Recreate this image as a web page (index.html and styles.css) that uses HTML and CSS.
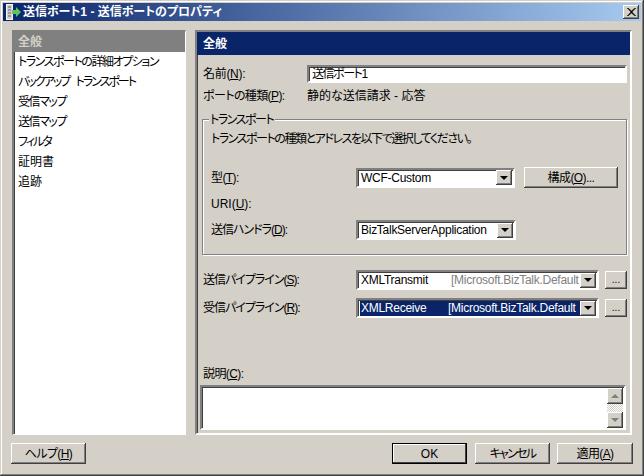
FILE: index.html
```html
<!DOCTYPE html>
<html lang="ja">
<head>
<meta charset="utf-8">
<title>送信ポート1 - 送信ポートのプロパティ</title>
<link rel="stylesheet" href="styles.css">
</head>
<body>
<div class="window">
  <div class="titlebar">
    <svg class="appicon" width="16" height="16" viewBox="0 0 16 16">
      <rect x="1.500" y="0.500" width="6" height="15" fill="#d4d0c8" stroke="#f4f4f4"/>
      <path d="M3 3h3M3 6h3M3 9h3M3 12h3" stroke="#506080"/>
      <path d="M7 6h4V3l5 5-5 5v-3H7z" fill="#58c860"/>
    </svg>
    <span class="titletext">送信ポート1 - 送信ポートのプロパティ</span>
    <button class="close" type="button"><svg width="9" height="8" viewBox="0 0 9 8"><path d="M1 0l3.500 3L8 0h0.800L5 4l3.800 4H8L4.500 5 1 8H0.200L4 4 0.200 0z" fill="#000" stroke="#000" stroke-width=".5"/></svg></button>
  </div>

  <div class="main">
    <ul class="nav sunken">
      <li class="selected">全般</li>
      <li class="k15">トランスポートの詳細オプション</li>
      <li class="k20 spaced">バックアップ トランスポート</li>
      <li class="k15">受信マップ</li>
      <li class="k15">送信マップ</li>
      <li class="k20">フィルタ</li>
      <li>証明書</li>
      <li>追跡</li>
    </ul>

    <section class="panel sunken">
      <h1 class="panel-head">全般</h1>
      <div class="form">
        <div class="row name-row">
          <label class="lbl-short k03">名前(<u>N</u>):</label>
          <div class="input sunken-field k15">送信ポート1</div>
        </div>
        <div class="row type-row">
          <label class="lbl-short k06">ポートの種類(<u>P</u>):</label>
          <span>静的な送信請求 - 応答</span>
        </div>

        <div class="group">
          <span class="legend k15">トランスポート</span>
          <p class="group-desc k15">トランスポートの種類とアドレスを以下で選択してください。</p>
          <div class="row r-type">
            <label class="lbl-group k06">型(<u>T</u>):</label>
            <div class="select sunken-field wide"><span class="val">WCF-Custom</span><span class="drop"><i></i></span></div>
            <button class="btn cfg k06" type="button">構成(<u>O</u>)...</button>
          </div>
          <div class="row r-uri"><label class="lbl-group">URI(<u>U</u>):</label></div>
          <div class="row r-handler">
            <label class="lbl-group k10">送信ハンドラ(<u>D</u>):</label>
            <div class="select sunken-field wide"><span class="val">BizTalkServerApplication</span><span class="drop"><i></i></span></div>
          </div>
        </div>

        <div class="row pipe first">
          <label class="lbl-pipe k10">送信パイプライン(<u>S</u>):</label>
          <div class="select sunken-field pipesel"><span class="val"><span class="pname">XMLTransmit</span><span class="pasm">[Microsoft.BizTalk.Default</span></span><span class="drop"><i></i></span></div>
          <button class="btn dots" type="button">...</button>
        </div>
        <div class="row pipe">
          <label class="lbl-pipe k10">受信パイプライン(<u>R</u>):</label>
          <div class="select sunken-field pipesel hilite"><span class="val"><span class="pname">XMLReceive</span><span class="pasm">[Microsoft.BizTalk.Default</span></span><span class="drop"><i></i></span></div>
          <button class="btn dots" type="button">...</button>
        </div>

        <label class="desc-label k06">説明(<u>C</u>):</label>
        <div class="textarea sunken-field">
          <div class="scroll">
            <span class="sbtn"><i class="up"></i></span>
            <span class="strack"></span>
            <span class="sbtn"><i></i></span>
          </div>
        </div>
      </div>
    </section>
  </div>

  <div class="footer">
    <button class="btn foot k06" type="button">ヘルプ(<u>H</u>)</button>
    <div class="spacer"></div>
    <button class="btn foot default" type="button">OK</button>
    <button class="btn foot k17" type="button">キャンセル</button>
    <button class="btn foot apply k06" type="button">適用(<u>A</u>)</button>
  </div>
</div>
</body>
</html>
```
FILE: styles.css
```css
* { box-sizing: border-box; }
html, body { margin: 0; padding: 0; }
body {
  width: 644px;
  height: 476px;
  overflow: hidden;
  background: #d4d0c8;
  font: 12px/14px "Liberation Sans", "Noto Sans CJK JP", sans-serif;
  font-feature-settings: "palt" 1;
  color: #000;
}
u { text-underline-offset: 1px; }

.k03 { letter-spacing: -.3px; }
.k06 { letter-spacing: -.6px; }
.k10 { letter-spacing: -1px; }
.k15 { letter-spacing: -1.45px; }
.k17 { letter-spacing: -1.7px; }
.k20 { letter-spacing: -2px; }
.spaced { word-spacing: 5px; }

.window {
  width: 644px;
  height: 476px;
  padding: 3px;
  background: #d4d0c8;
  box-shadow: inset -1px -1px 0 #404040, inset 1px 1px 0 #d4d0c8, inset -2px -2px 0 #808080, inset 2px 2px 0 #fff;
  display: flex;
  flex-direction: column;
}

.titlebar {
  height: 18px;
  flex: none;
  display: flex;
  align-items: center;
  padding: 0 2px;
  background: linear-gradient(90deg, #0a246a, #a6caf0);
  color: #fff;
  font-weight: bold;
}
.appicon { flex: none; }
.titletext { margin-left: 2px; flex: 1; white-space: nowrap; font-size: 12px; }
.close {
  width: 16px; height: 14px; padding: 0; flex: none;
  display: flex; align-items: center; justify-content: center;
  background: #d4d0c8; border: 0;
  box-shadow: inset -1px -1px 0 #404040, inset 1px 1px 0 #fff, inset -2px -2px 0 #808080;
}

.main {
  flex: none;
  height: 405px;
  margin-top: 9px;
  padding: 0 9px;
  display: flex;
  gap: 9px;
}

.sunken {
  border: 2px solid;
  border-color: #808080 #fff #fff #808080;
  box-shadow: inset 1px 1px 0 #404040;
}

.nav {
  width: 174px;
  flex: none;
  margin: 0;
  padding: 0;
  list-style: none;
  background: #fff;
  border-width: 2px 1px 1px 2px;
}
.nav li { height: 20px; padding: 3px 4px 0; white-space: nowrap; }
.nav li.selected { background: #808080; color: #d4d0c8; font-weight: bold; }

.panel { flex: 1; min-width: 0; display: flex; flex-direction: column; background: #d4d0c8; }
.panel-head {
  margin: 0;
  height: 23px;
  flex: none;
  padding: 5px 6px 0;
  background: #0a246a;
  color: #fff;
  font-size: 12px;
  line-height: 14px;
  font-weight: bold;
}

.form { flex: 1; padding: 10px 3px 0 6px; display: flex; flex-direction: column; }
.row { display: flex; align-items: center; }
label { display: block; white-space: nowrap; }

.sunken-field {
  background: #fff;
  border: 2px solid;
  border-color: #808080 #fff #fff #808080;
  box-shadow: inset 1px 1px 0 #404040;
}
.name-row { height: 18px; }
.lbl-short { width: 104px; flex: none; }
.input { flex: 1; height: 18px; padding: 0 2px 0 3px; }
.type-row { height: 14px; margin-top: 6px; }

.group {
  position: relative;
  margin: 16px 0 0 -1px;
  height: 136px;
  padding: 12px 8px 0 8px;
  border: 1px solid #808080;
  box-shadow: inset 1px 1px 0 #fff, 1px 1px 0 #fff;
}
.legend {
  position: absolute;
  left: 6px;
  top: -7px;
  padding: 0 2px 0 1px;
  background: #d4d0c8;
  white-space: nowrap;
}
.group-desc { margin: 0; height: 14px; white-space: nowrap; }

.lbl-group { width: 145px; flex: none; }
.r-type { margin-top: 21px; height: 21px; }
.r-uri { margin-top: 9px; height: 14px; }
.r-handler { margin-top: 9px; height: 20px; }

.select { display: flex; align-items: center; height: 100%; padding: 0 1px 0 2px; min-width: 0; }
.wide { width: 160px; height: 20px; }
.val { flex: 1; min-width: 0; white-space: nowrap; overflow: hidden; padding-left: 1px; line-height: 14px; letter-spacing: -.27px; }
.drop {
  width: 16px; height: 15px; flex: none;
  display: flex; align-items: center; justify-content: center;
  background: #d4d0c8;
  box-shadow: inset -1px -1px 0 #404040, inset 1px 1px 0 #fff, inset -2px -2px 0 #808080;
}
.drop i { width: 0; height: 0; border: 4px solid transparent; border-top: 4px solid #000; border-bottom: 0; }

.btn {
  padding: 0;
  background: #d4d0c8;
  border: 0;
  font-family: inherit;
  font-size: inherit;
  line-height: inherit;
  font-feature-settings: inherit;
  color: #000;
  box-shadow: inset -1px -1px 0 #404040, inset 1px 1px 0 #fff, inset -2px -2px 0 #808080;
}
.cfg { width: 95px; height: 21px; margin-left: 9px; }

.pipe { height: 20px; margin-top: 8px; }
.pipe.first { margin-top: 15px; }
.lbl-pipe { width: 153px; flex: none; }
.pipesel { width: 243px; height: 20px; }
.dots { width: 22px; height: 18px; margin-left: 6px; font-size: 10px; line-height: 10px; }
.pname { display: inline-block; width: 90px; }
.pasm { color: #808080; }
.hilite .val { background: #0a246a; color: #fff; height: 15px; }
.hilite .pname { width: 87px; }
.hilite .pasm { color: #fff; }

.desc-label { margin-top: 49px; margin-left: 0; height: 14px; }
.textarea {
  margin: 4px 1px 0 -3px;
  height: 45px;
  display: flex;
  justify-content: flex-end;
  padding: 1px 1px 0 0;
}
.scroll { width: 16px; display: flex; flex-direction: column; height: 100%; }
.sbtn {
  height: 16px; flex: none;
  display: flex; align-items: center; justify-content: center;
  background: #d4d0c8;
  box-shadow: inset -1px -1px 0 #404040, inset 1px 1px 0 #fff, inset -2px -2px 0 #808080;
}
.sbtn i { width: 0; height: 0; border: 4px solid transparent; border-top: 4px solid #808080; border-bottom: 0; }
.sbtn i.up { border-top: 0; border-bottom: 4px solid #808080; }
.strack { flex: 1; background: repeating-conic-gradient(#d4d0c8 0 25%, #fff 0 50%) 0 0 / 2px 2px; }

.footer { flex: none; margin-top: 8px; padding: 0 8px; display: flex; gap: 8px; }
.spacer { flex: 1; }
.foot { width: 75px; height: 21px; }
.apply { width: 76px; margin-left: -1px; }
.default { outline: 1px solid #000; outline-offset: -1px; box-shadow: inset -2px -2px 0 #404040, inset 2px 2px 0 #fff; }
```
